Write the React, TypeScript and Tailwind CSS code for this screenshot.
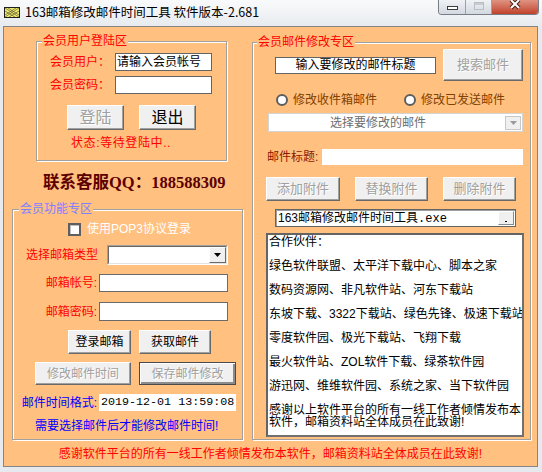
import React from 'react';

interface BtnProps {
  label: string;
  className: string;
  disabled?: boolean;
  isDefault?: boolean;
}

function Btn({ label, className, disabled, isDefault }: BtnProps) {
  return (
    <div
      className={`flex items-center justify-center shrink-0 bg-[#f0f0f0] ${
        isDefault
          ? 'border border-[#4a4a4a] shadow-[inset_1px_1px_0_#fff,inset_-2px_-2px_0_#8c8c8c]'
          : 'border border-t-white border-l-white border-r-[#696969] border-b-[#696969] shadow-[inset_-1px_-1px_0_#a0a0a0]'
      } ${disabled ? 'text-[#a0a0a0] [text-shadow:1px_1px_0_#fff]' : 'text-black'} ${className}`}
    >
      {label}
    </div>
  );
}

interface GroupProps {
  title: string;
  legendClass: string;
  className: string;
  children: React.ReactNode;
}

function Group({ title, legendClass, className, children }: GroupProps) {
  return (
    <div className={`flex flex-col shrink-0 border border-[#a0a0a0] shadow-[inset_1px_1px_0_#fff,1px_1px_0_#fff] ${className}`}>
      <span className={`self-start -mt-[8px] -mb-[6px] h-[14px] px-[1px] bg-[#ffc080] ${legendClass}`}>{title}</span>
      {children}
    </div>
  );
}

function DownArrow({ color }: { color: string }) {
  return (
    <svg width="7" height="4" viewBox="0 0 7 4">
      <polygon points="0,0 7,0 3.5,4" fill={color} />
    </svg>
  );
}

function TitleBar() {
  return (
    <div className="h-[26px] shrink-0 flex items-start bg-linear-to-b from-[#f9fafb] to-[#e8ebef]">
      <svg className="ml-[4px] mt-[7px]" width="16" height="11" viewBox="0 0 16 11">
        <rect x="0.5" y="0.5" width="15" height="10" fill="#f3ee6a" stroke="#1e1e1e" />
        <path d="M1 1 L15 10 M15 1 L1 10 M4 1 L15 8 M12 1 L1 8 M1 4 L11 10 M15 4 L5 10" stroke="#5a5a3a" strokeWidth="0.7" />
      </svg>
      <span className="ml-[5px] mt-[4px] text-[12.5px] leading-[16px] font-['Noto_Sans_CJK_SC',sans-serif] text-black">
        163邮箱修改邮件时间工具 软件版本-2.681
      </span>
      <div className="ml-auto mr-[3px] flex h-[15px] border border-t-0 border-[#767d87] rounded-b-[4px] overflow-hidden">
        <div className="w-[27px] flex justify-center bg-linear-to-b from-[#f0f2f5] to-[#d3d9e0] border-r border-[#9aa1aa]">
          <div className="mt-[6px] w-[11px] h-[4px] bg-white border border-[#3c3c3c]" />
        </div>
        <div className="w-[26px] flex justify-center bg-linear-to-b from-[#f0f2f5] to-[#d3d9e0] border-r border-[#9aa1aa]">
          <div className="mt-[2px] w-[10px] h-[8px] border border-[#b9bec5] shadow-[inset_0_2px_0_#c9cdd2]" />
        </div>
        <div className="w-[46px] flex justify-center bg-linear-to-b from-[#df9382] to-[#c0402a]">
          <svg width="14" height="10" viewBox="0 0 14 10">
            <path d="M3 0 L11 8 M11 0 L3 8" stroke="#4a2018" strokeWidth="4" />
            <path d="M3 0 L11 8 M11 0 L3 8" stroke="#fff" strokeWidth="2" />
          </svg>
        </div>
      </div>
    </div>
  );
}

const partners = [
  '合作伙伴：',
  '',
  '绿色软件联盟、太平洋下载中心、脚本之家',
  '',
  '数码资源网、非凡软件站、河东下载站',
  '',
  '东坡下载、3322下载站、绿色先锋、极速下载站',
  '',
  '零度软件园、极光下载站、飞翔下载',
  '',
  '最火软件站、ZOL软件下载、绿茶软件园',
  '',
  '游迅网、维维软件园、系统之家、当下软件园',
  '',
  '感谢以上软件平台的所有一线工作者倾情发布本',
  '软件，邮箱资料站全体成员在此致谢!',
];

export default function App() {
  return (
    <div className="w-[542px] h-[472px] overflow-hidden bg-[#e6e9ed] flex flex-col font-['Liberation_Sans','Noto_Sans_CJK_SC',sans-serif] text-[12px] leading-[14px] text-black">
      <TitleBar />
      <div className="ml-[3px] w-[535px] h-[441px] shrink-0 border border-[#858585] bg-[#ffc080] flex flex-col">
        <div className="flex items-start mt-[14px]">
          {/* left column */}
          <div className="ml-[8px] w-[231px] flex flex-col shrink-0">
            <Group title="会员用户登陆区" legendClass="ml-[5px] text-[#ff0000]" className="ml-[24px] w-[191px] h-[120px]">
              <div className="mt-[11px] flex items-center">
                <span className="ml-[13px] w-[65px] text-[#ff0000]">会员用户：</span>
                <div className="w-[97px] h-[18px] bg-white border border-[#646464] pl-[1px] leading-[16px]">请输入会员帐号</div>
              </div>
              <div className="mt-[5px] flex items-center">
                <span className="ml-[13px] w-[65px] text-[#ff0000]">会员密码：</span>
                <div className="w-[97px] h-[18px] bg-white border border-[#646464]" />
              </div>
              <div className="mt-[11px] ml-[30px] flex gap-[15px]">
                <Btn label="登陆" disabled className="w-[57px] h-[25px] text-[16px]" />
                <Btn label="退出" className="w-[57px] h-[25px] text-[16px]" />
              </div>
              <span className="mt-[6px] ml-[34px] tracking-[0.6px] text-[#ff0000]">状态:等待登陆中..</span>
            </Group>

            <span className="mt-[12px] ml-[31px] text-[16.5px] leading-[20px] font-bold text-[#5c0000] font-['Liberation_Serif','Noto_Sans_CJK_SC',serif] whitespace-nowrap">
              联系客服QQ：188588309
            </span>

            <Group title="会员功能专区" legendClass="ml-[6px] text-[#8080ff]" className="mt-[16px] w-[231px] h-[231px]">
              <div className="mt-[12px] ml-[55px] flex items-center">
                <div className="w-[13px] h-[13px] bg-white border-2 border-[#5f5f5f] shadow-[inset_1px_1px_0_#c0c0c0]" />
                <span className="ml-[6px] text-white">使用POP3协议登录</span>
              </div>
              <div className="mt-[9px] flex items-center">
                <span className="w-[94px] pr-[9px] text-right text-[#ff0000]">选择邮箱类型</span>
                <div className="w-[121px] h-[20px] border border-t-[#a0a0a0] border-l-[#a0a0a0] border-r-white border-b-white">
                  <div className="h-full border border-t-[#696969] border-l-[#696969] border-r-[#e3e3e3] border-b-[#e3e3e3] bg-white flex justify-end">
                    <div className="w-[17px] h-full flex items-center justify-center bg-[#f0f0f0] border border-t-white border-l-white border-r-[#696969] border-b-[#696969]">
                      <DownArrow color="#000" />
                    </div>
                  </div>
                </div>
              </div>
              <div className="mt-[9px] flex items-center">
                <span className="w-[86px] pr-[2px] text-right text-[#ff0000]">邮箱帐号:</span>
                <div className="w-[129px] h-[18px] bg-white border border-[#6a6a6a]" />
              </div>
              <div className="mt-[10px] flex items-center">
                <span className="w-[86px] pr-[2px] text-right text-[#ff0000]">邮箱密码:</span>
                <div className="w-[129px] h-[19px] bg-white border border-[#6a6a6a]" />
              </div>
              <div className="mt-[9px] ml-[55px] flex gap-[8px]">
                <Btn label="登录邮箱" className="w-[63px] h-[24px]" />
                <Btn label="获取邮件" className="w-[72px] h-[24px]" />
              </div>
              <div className="mt-[8px] ml-[22px] flex gap-[8px]">
                <Btn label="修改邮件时间" disabled className="w-[96px] h-[23px]" />
                <Btn label="保存邮件修改" disabled isDefault className="w-[97px] h-[23px]" />
              </div>
              <div className="mt-[9px] flex items-center">
                <span className="w-[86px] pr-[2px] text-right text-[#0000ff]">邮件时间格式:</span>
                <div className="w-[137px] h-[17px] bg-white pl-[2px] font-['Liberation_Mono',monospace] text-[11.7px] leading-[17px] whitespace-nowrap overflow-hidden">
                  2019-12-01 13:59:08
                </div>
              </div>
              <span className="mt-[8px] ml-[22px] text-[#0000ff] whitespace-nowrap">需要选择邮件后才能修改邮件时间!</span>
            </Group>
          </div>

          {/* right column */}
          <Group title="会员邮件修改专区" legendClass="ml-[4px] text-[#ff0000]" className="mt-[1px] ml-[9px] w-[279px] h-[398px]">
            <div className="mt-[6px] flex items-center">
              <div className="ml-[22px] w-[161px] h-[17px] bg-white border border-[#646464] text-center leading-[15px]">输入要修改的邮件标题</div>
              <Btn label="搜索邮件" disabled className="ml-[7px] w-[80px] h-[32px] text-[13px]" />
            </div>
            <div className="mt-[12px] flex items-center h-[13px]">
              <div className="ml-[23px] w-[128px] flex items-center">
                <div className="w-[12px] h-[12px] rounded-full bg-white border-2 border-[#5e5e5e]" />
                <span className="ml-[5px] text-[#804000]">修改收件箱邮件</span>
              </div>
              <div className="flex items-center">
                <div className="w-[12px] h-[12px] rounded-full bg-white border-2 border-[#5e5e5e]" />
                <span className="ml-[5px] text-[#804000]">修改已发送邮件</span>
              </div>
            </div>
            <div className="mt-[7px] ml-[15px] w-[255px] h-[19px] bg-white border border-[#d4d4d4] flex items-center">
              <span className="ml-[61px] text-[#6d6d6d]">选择要修改的邮件</span>
              <div className="ml-auto mr-[1px] w-[16px] h-[14px] flex items-center justify-center bg-[#f0f0f0] border border-[#c8c8c8]">
                <DownArrow color="#9a9a9a" />
              </div>
            </div>
            <div className="mt-[17px] flex items-center">
              <span className="ml-[14px] w-[55px] text-[#8b1a00]">邮件标题:</span>
              <div className="w-[201px] h-[16px] bg-white" />
            </div>
            <div className="mt-[12px] ml-[13px] flex gap-[15px]">
              <Btn label="添加附件" disabled className="w-[74px] h-[24px] text-[13px]" />
              <Btn label="替换附件" disabled className="w-[73px] h-[24px] text-[13px]" />
              <Btn label="删除附件" disabled className="w-[73px] h-[24px] text-[13px]" />
            </div>
            <div className="mt-[8px] ml-[22px] w-[241px] h-[18px] bg-white border border-[#646464] shadow-[inset_1px_1px_0_#a0a0a0] flex items-center">
              <span className="ml-[2px] leading-[16px]">
                163邮箱修改邮件时间工具<span className="font-['Liberation_Mono',monospace]">.exe</span>
              </span>
              <div className="ml-auto mr-[1px] w-[16px] h-[14px] flex items-end justify-center pb-[2px] bg-[#f0f0f0] border border-t-white border-l-white border-r-[#8a8a8a] border-b-[#8a8a8a]">
                <div className="w-[2px] h-[1px] bg-black" />
              </div>
            </div>
            <div className="mt-[6px] ml-[13px] w-[258px] h-[204px] bg-white border-2 border-t-[#646464] border-l-[#646464] border-r-[#707070] border-b-[#707070] pl-[1px] pt-[1px] overflow-hidden">
              {partners.map((line, i) => (
                <div key={i} className="h-[12px] leading-[12px] whitespace-nowrap">
                  {line}
                </div>
              ))}
            </div>
          </Group>
        </div>

        <p className="mt-[7px] text-center text-[#ff0000]">
          感谢软件平台的所有一线工作者倾情发布本软件，邮箱资料站全体成员在此致谢!
        </p>
      </div>
    </div>
  );
}
